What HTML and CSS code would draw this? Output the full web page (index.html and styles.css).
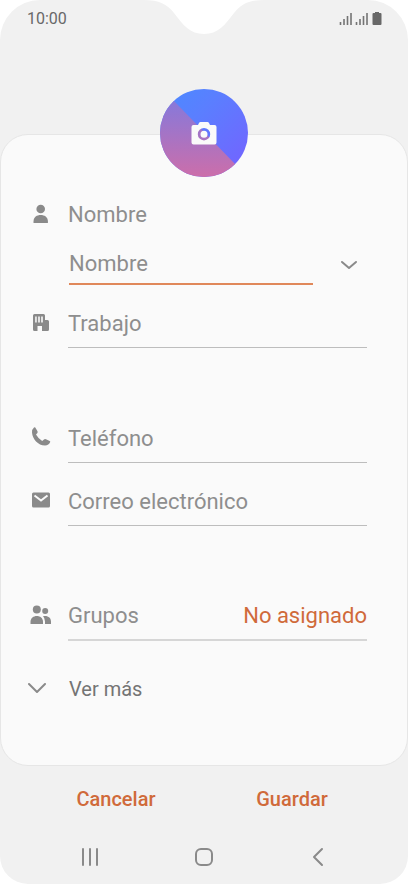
FILE: index.html
```html
<!DOCTYPE html>
<html lang="es">
<head>
<meta charset="utf-8">
<meta name="viewport" content="width=device-width, initial-scale=1">
<title>Nombre</title>
<link rel="stylesheet" href="styles.css">
</head>
<body>
<div class="phone">
  <svg class="notch" viewBox="0 0 128 34" aria-hidden="true"><path d="M4 0C19 0 27 4 34 13C43 25 50 34 64 34C78 34 85 25 94 13C101 4 109 0 124 0Z"/></svg>
  <header class="status">
    <time>10:00</time>
    <svg class="status-icons" viewBox="0 0 43 14" aria-hidden="true">
      <path d="M1.500 13v-3M5 13V7M8.500 13V4M12 13V1M17.500 13v-3M21 13V7M24.500 13V4M28 13V1" class="bars"/>
      <path d="M36 0h4v1h1.500q1 0 1 1v10q0 1-1 1h-7q-1 0-1-1V2q0-1 1-1H36z"/>
    </svg>
  </header>

  <form class="form">
    <main class="card">
      <button type="button" class="photo" aria-label="Foto">
        <svg viewBox="0 0 88 88" aria-hidden="true">
          <defs>
            <linearGradient id="blue" x1="0" y1="0" x2="1" y2="1"><stop offset="0" stop-color="#4a8bff"/><stop offset=".35" stop-color="#5a7fff"/><stop offset="1" stop-color="#7660ff"/></linearGradient>
            <linearGradient id="pink" x1="0" y1="0" x2="0" y2="1"><stop offset=".05" stop-color="#8a78d8"/><stop offset="1" stop-color="#cc6eaa"/></linearGradient>
            <clipPath id="disc"><circle cx="44" cy="44" r="44"/></clipPath>
          </defs>
          <circle cx="44" cy="44" r="44" fill="url(#blue)"/>
          <path d="M0 12H14L75 75V88H0Z" fill="url(#pink)" clip-path="url(#disc)"/>
          <path fill="#fafafa" fill-rule="evenodd" d="M33.500 36H38l1-2q.5-1 1.500-1h7q1 0 1.500 1l1 2h4.500q2 0 2 2v15.500q0 2-2 2h-21q-2 0-2-2V38q0-2 2-2ZM44 39a6.200 6.200 0 1 0 0 12.400A6.200 6.200 0 0 0 44 39Zm0 2.700a3.500 3.500 0 1 1 0 7 3.500 3.500 0 0 1 0-7Z"/>
        </svg>
      </button>

      <div class="fields">
        <div class="row heading">
          <svg class="icon" viewBox="0 0 24 24" aria-hidden="true"><circle cx="12.700" cy="7" r="4.300"/><path d="M5.500 21v-1.500c0-4.500 3.500-6.500 7.200-6.500s7.200 2 7.200 6.500V21Z"/></svg>
          <label for="nombre">Nombre</label>
        </div>
        <div class="name">
          <input id="nombre" type="text" placeholder="Nombre">
          <button type="button" class="expand" aria-label="Ampliar"><svg viewBox="0 0 18 18" aria-hidden="true"><path d="M2 7l7 6 7-6"/></svg></button>
        </div>

        <div class="row">
          <label for="trabajo" aria-label="Trabajo"><svg class="icon" viewBox="0 0 24 24" aria-hidden="true"><path fill-rule="evenodd" d="M6.500 4h9q1.500 0 1.500 1.500V10h2.500q1.500 0 1.500 1.500v8q0 1.500-1.500 1.500H14v-5H9.500v5h-3Q5 21 5 19.500v-14Q5 4 6.500 4ZM7.200 6.500v6h1.500v-6Zm3 0v6h1.600v-6Zm3 0v6h1.600v-6Z"/></svg></label>
          <input class="line" id="trabajo" type="text" placeholder="Trabajo">
        </div>
        <div class="row section">
          <label for="telefono" aria-label="Teléfono"><svg class="icon" viewBox="0 0 24 24" aria-hidden="true"><path d="M7.300 2.500 9.500 6.300q.5 1.200-.3 2L8 9.600q2.500 4.500 6.200 6.400l1.800-1.600q.8-.7 2-.2l3.700 1.700q.8.500.5 1.200-1.300 3.400-5.200 3.400C10 20.500 4.500 14 4 7.500Q4 4 6 2.500q.7-.6 1.300 0Z"/></svg></label>
          <input class="line" id="telefono" type="tel" placeholder="Teléfono">
        </div>
        <div class="row next">
          <label for="correo" aria-label="Correo electrónico"><svg class="icon" viewBox="0 0 24 24" aria-hidden="true"><rect x="4" y="4.500" width="18" height="15" rx="1.500"/><path class="flap" d="M6.500 7.500 13 12.500 19.500 7.500"/></svg></label>
          <input class="line" id="correo" type="email" placeholder="Correo electrónico">
        </div>
        <div class="row section">
          <svg class="icon" viewBox="0 0 24 24" aria-hidden="true"><circle cx="8.800" cy="6.500" r="4"/><path d="M2.500 21v-2c0-4 3-6 6.300-6s6.200 2 6.200 6v2Z"/><circle cx="17.200" cy="8" r="3"/><path d="M15 13.200c4.500-1.200 8 1.300 8 5.300V21H17v-2.500q0-3.500-2-5.300Z"/></svg>
          <button type="button" class="line groups"><span>Grupos</span><span class="value">No asignado</span></button>
        </div>
        <button type="button" class="more"><svg viewBox="0 0 20 18" aria-hidden="true"><path d="M1 4l8 8 8-8"/></svg><span>Ver más</span></button>
      </div>
    </main>

    <div class="actions">
      <button type="button">Cancelar</button>
      <button type="submit">Guardar</button>
    </div>
  </form>

  <nav class="nav">
    <button type="button" aria-label="Recientes"><svg viewBox="0 0 20 20" aria-hidden="true"><path d="M3 2v16M10 2v16M17 2v16"/></svg></button>
    <button type="button" aria-label="Inicio"><svg viewBox="0 0 20 20" aria-hidden="true"><rect x="2" y="2" width="16" height="16" rx="5"/></svg></button>
    <button type="button" aria-label="Atrás"><svg viewBox="0 0 20 20" aria-hidden="true"><path d="M14 2 6 10l8 8"/></svg></button>
  </nav>
</div>
</body>
</html>
```
FILE: styles.css
```css
* { box-sizing: border-box; }

body {
  margin: 0;
  background: #fff;
  color: #8e8e8e;
  font-family: Roboto, sans-serif;
  font-size: 22px;
  line-height: 28px;
}

button, input {
  margin: 0;
  padding: 0;
  border: 0;
  border-radius: 0;
  outline: 0;
  background: none;
  color: inherit;
  font: inherit;
}

button { cursor: pointer; }
svg { display: block; fill: #8a8a8a; }

.phone {
  position: relative;
  display: flex;
  flex-direction: column;
  min-height: 100vh;
  background: #f1f1f1;
  border-radius: 40px 40px 28px 28px;
}

.notch {
  position: absolute;
  top: 0;
  left: 50%;
  width: 128px;
  margin-left: -64px;
  fill: #fff;
}

.status {
  display: flex;
  justify-content: space-between;
  align-items: center;
  height: 38px;
  padding: 0 26px 0 27px;
  color: #686868;
  font-size: 16px;
}

.status-icons { width: 43px; height: 14px; fill: #686868; }
.bars { stroke: #747474; stroke-width: 1.6; }

.form {
  display: flex;
  flex: 1;
  flex-direction: column;
  padding-top: 96px;
}

.card {
  flex: 1;
  padding-bottom: 48px;
  background: #fafafa;
  border: 1px solid #e6e6e6;
  border-radius: 28px;
}

.photo {
  display: block;
  width: 88px;
  height: 88px;
  margin: -46px auto 13px;
}

.fields { padding: 0 40px 0 27px; }

.row {
  display: grid;
  grid-template-columns: 40px 1fr;
  align-items: center;
  height: 50px;
}

.icon { width: 24px; height: 24px; }
.row .icon { margin-bottom: 2px; }
.section { margin-top: 65px; }
.next { margin-top: 13px; }

.line {
  width: 100%;
  height: 50px;
  padding-top: 2px;
  border-bottom: 1px solid #bdbdbd;
}

input { min-width: 0; }
input::placeholder { color: #8e8e8e; opacity: 1; }

.name {
  display: flex;
  align-items: center;
  gap: 27px;
  height: 43px;
  margin: 2px 0 13px 41px;
}

.name input {
  flex: 1;
  height: 43px;
  padding-top: 2px;
  border-bottom: 2px solid #e0885a;
}

.expand { margin-right: 9px; }
.expand svg { width: 18px; height: 18px; }

.expand path, .more path, .nav path, .nav rect {
  fill: none;
  stroke: #8a8a8a;
  stroke-width: 2;
  stroke-linecap: round;
  stroke-linejoin: round;
}

.row .flap { fill: none; stroke: #fafafa; stroke-width: 2; }

.groups {
  display: flex;
  justify-content: space-between;
  align-items: center;
  border-bottom: 2px solid #d6d6d6;
}

.value { color: #d06a3a; }

.more {
  display: flex;
  align-items: center;
  gap: 21px;
  height: 48px;
  margin-top: 24px;
  color: #747474;
  font-size: 20px;
}

.more svg { width: 20px; height: 18px; }

.actions {
  display: grid;
  grid-template-columns: 1fr 1fr;
  height: 64px;
  padding: 2px 28px 0;
  color: #d06a3a;
  font-size: 20px;
  font-weight: 500;
}

.nav {
  display: grid;
  grid-template-columns: repeat(3, 1fr);
  height: 54px;
  padding: 0 33px;
}

.nav button { display: grid; place-items: center; }
.nav svg { width: 20px; height: 20px; }
```
